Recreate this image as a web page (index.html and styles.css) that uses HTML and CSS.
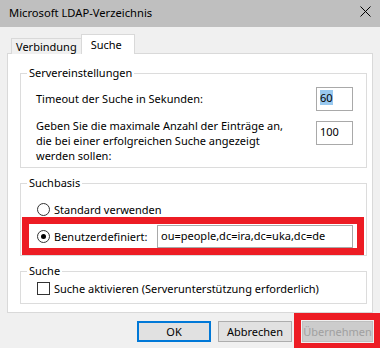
FILE: index.html
```html
<!DOCTYPE html>
<html>
<head>
<meta charset="UTF-8" />
<link rel="stylesheet" href="styles.css">
</head>
<body>
<div class="window">
  <div class="titlebar">
    <span class="title">Microsoft LDAP-Verzeichnis</span>
    <svg class="close" width="11" height="11" viewBox="0 0 11 11">
      <path d="M0.5 0.5 L10.5 10.5 M10.5 0.5 L0.5 10.5" stroke="#000" stroke-width="1" fill="none" />
    </svg>
  </div>

  <div class="tabs">
    <div class="tab">Verbindung</div>
    <div class="tab active">Suche</div>
  </div>

  <div class="panel">
    <fieldset class="group server">
      <legend>Servereinstellungen</legend>
      <div class="row timeout">
        <div class="label">Timeout der Suche in Sekunden:</div>
        <div class="field num"><span class="sel">60</span></div>
      </div>
      <div class="row maxcount">
        <div class="label">Geben Sie die maximale Anzahl der Einträge an,<br>die bei einer erfolgreichen Suche angezeigt<br>werden sollen:</div>
        <div class="field num">100</div>
      </div>
    </fieldset>

    <fieldset class="group base">
      <legend>Suchbasis</legend>
      <div class="option">
        <span class="radio"></span>
        <span class="text">Standard verwenden</span>
      </div>
      <div class="option custom mark">
        <span class="radio checked"></span>
        <span class="text">Benutzerdefiniert:</span>
        <div class="field dn">ou=people,dc=ira,dc=uka,dc=de</div>
      </div>
    </fieldset>

    <fieldset class="group search">
      <legend>Suche</legend>
      <div class="option">
        <span class="check"></span>
        <span class="text">Suche aktivieren (Serverunterstützung erforderlich)</span>
      </div>
    </fieldset>
  </div>

  <div class="buttons">
    <div class="btn default">OK</div>
    <div class="btn">Abbrechen</div>
    <div class="mark apply">
      <div class="btn disabled">Übernehmen</div>
    </div>
  </div>
</div>
</body>
</html>
```

FILE: styles.css
```css
* {
  box-sizing: border-box;
}

html, body {
  margin: 0;
  padding: 0;
}

body {
  width: 380px;
  height: 348px;
  overflow: hidden;
  background: #f0f0f0;
  font-family: 'Noto Sans', sans-serif;
  font-size: 11px;
  line-height: 15px;
  color: #000;
}

div.window {
  width: 380px;
  height: 348px;
}

/* title bar */

div.titlebar {
  display: flex;
  align-items: flex-start;
  height: 27px;
  padding: 5px 0 0 9px;
  background: #bfbfbf;
  font-size: 11.2px;
}

div.titlebar svg.close {
  margin: 1px 9px 0 auto;
}

/* tabs */

div.tabs {
  display: flex;
  align-items: flex-end;
  height: 20px;
  margin-top: 7px;
  padding-left: 11px;
}

div.tab {
  height: 16px;
  padding: 0 5px 0 4px;
  line-height: 15px;
  border: 1px solid #d9d9d9;
  border-bottom: none;
  background: #f0f0f0;
}

div.tab.active {
  position: relative;
  z-index: 1;
  height: 20px;
  margin-left: -2px;
  padding: 2px 12px 0 9px;
  background: #fff;
}

/* panel */

div.panel {
  width: 366px;
  height: 260px;
  margin: -1px 0 0 7px;
  padding: 11px 5px 0 12px;
  background: #fff;
  border: 1px solid #d9d9d9;
}

fieldset.group {
  margin: 0;
  padding: 0;
  min-width: 0;
  border: 1px solid #dcdcdc;
}

fieldset.group legend {
  margin-left: 6px;
  padding: 0 2px;
  line-height: 16px;
}

fieldset.group + fieldset.group {
  margin-top: 7px;
}

div.row {
  display: flex;
  align-items: flex-start;
  justify-content: space-between;
  padding: 0 13px 0 15px;
}

div.row.timeout {
  margin-top: 6px;
}

div.row.timeout div.label {
  margin-top: 4px;
}

div.row.maxcount {
  margin-top: 7px;
  padding-bottom: 4px;
}

div.row.maxcount div.field {
  margin-top: 3px;
}

div.field {
  height: 24px;
  padding: 2px 0 0 3px;
  border: 1px solid #a9a9a9;
  background: #fff;
  white-space: nowrap;
}

div.field.num {
  width: 37px;
}

div.field span.sel {
  background: #99c9ef;
}

/* options */

div.option {
  display: flex;
  align-items: center;
  height: 15px;
  padding-left: 16px;
}

fieldset.base div.option:first-of-type {
  margin-top: 11px;
}

span.radio {
  position: relative;
  flex: none;
  width: 13px;
  height: 13px;
  margin-right: 4px;
  border: 1px solid #333;
  border-radius: 50%;
  background: #fff;
}

span.radio.checked::after {
  content: "";
  position: absolute;
  left: 3px;
  top: 3px;
  width: 5px;
  height: 5px;
  border-radius: 50%;
  background: #000;
}

span.check {
  flex: none;
  width: 13px;
  height: 13px;
  margin-right: 4px;
  border: 1px solid #333;
  background: #fff;
}

div.option.custom {
  height: 38px;
  margin: 0 2px 0 1px;
  padding-left: 8px;
  padding-right: 4px;
}

div.option.custom div.field {
  width: 196px;
  height: 23px;
  margin: 1px 0 0 auto;
  padding-left: 3px;
}

fieldset.search div.option {
  margin-top: 2px;
  margin-bottom: 7px;
}

/* red marks */

div.mark {
  border: 7px solid #ed1c24;
}

/* buttons */

div.buttons {
  display: flex;
  align-items: flex-start;
  justify-content: flex-end;
  margin-right: -1px;
}

div.btn {
  width: 74px;
  height: 21px;
  margin-top: 8px;
  line-height: 19px;
  text-align: center;
  background: #e1e1e1;
  border: 1px solid #adadad;
}

div.btn.default {
  margin-right: 7px;
  border: 2px solid #0078d7;
  line-height: 17px;
}

div.mark.apply {
  margin-left: 2px;
  padding: 1px;
}

div.btn.disabled {
  width: 71px;
  margin-top: 0;
  background: #cccccc;
  border-color: #bfbfbf;
  color: #a0a0a0;
}
```
